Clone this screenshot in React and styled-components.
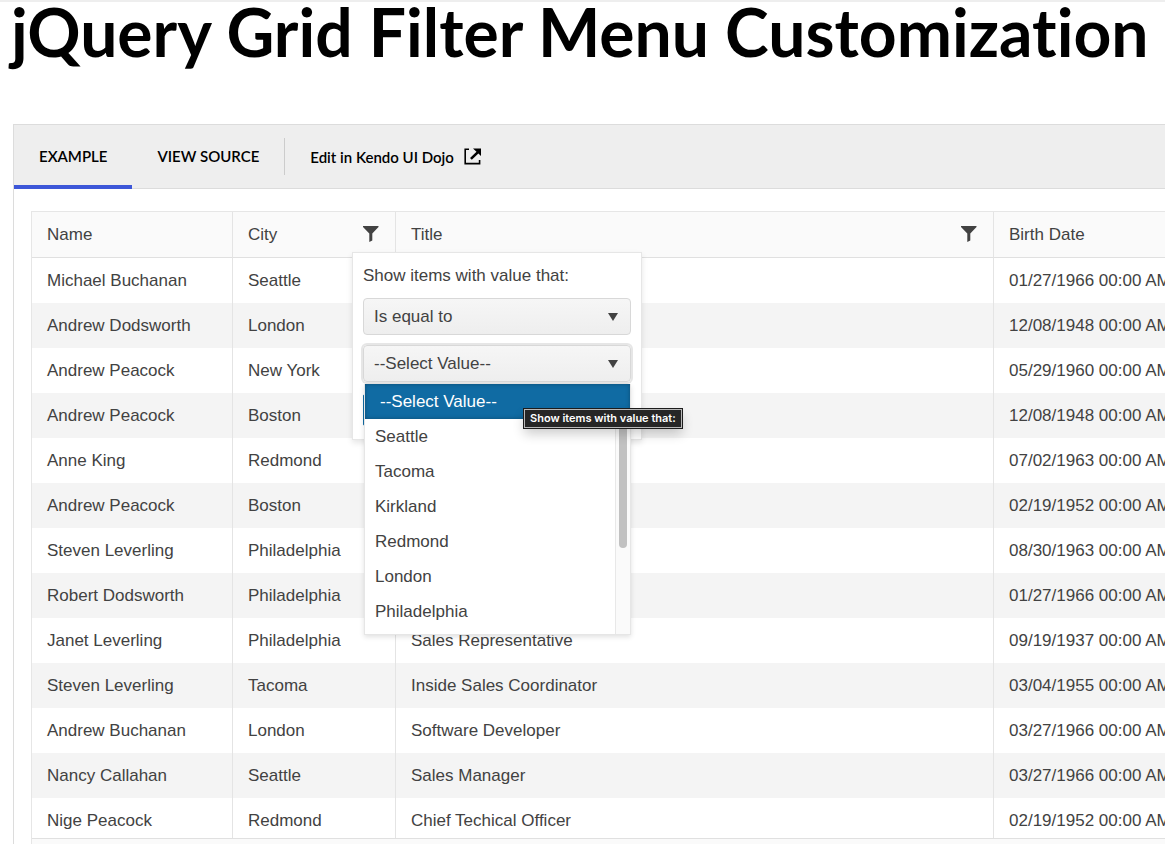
import React, { useState } from 'react'
import styled, { createGlobalStyle } from 'styled-components'

const employees = [
  ['Michael Buchanan', 'Seattle', '', '01/27/1966 00:00 AM'],
  ['Andrew Dodsworth', 'London', '', '12/08/1948 00:00 AM'],
  ['Andrew Peacock', 'New York', '', '05/29/1960 00:00 AM'],
  ['Andrew Peacock', 'Boston', '', '12/08/1948 00:00 AM'],
  ['Anne King', 'Redmond', '', '07/02/1963 00:00 AM'],
  ['Andrew Peacock', 'Boston', '', '02/19/1952 00:00 AM'],
  ['Steven Leverling', 'Philadelphia', '', '08/30/1963 00:00 AM'],
  ['Robert Dodsworth', 'Philadelphia', '', '01/27/1966 00:00 AM'],
  ['Janet Leverling', 'Philadelphia', 'Sales Representative', '09/19/1937 00:00 AM'],
  ['Steven Leverling', 'Tacoma', 'Inside Sales Coordinator', '03/04/1955 00:00 AM'],
  ['Andrew Buchanan', 'London', 'Software Developer', '03/27/1966 00:00 AM'],
  ['Nancy Callahan', 'Seattle', 'Sales Manager', '03/27/1966 00:00 AM'],
  ['Nige Peacock', 'Redmond', 'Chief Techical Officer', '02/19/1952 00:00 AM'],
]

const cities = ['Seattle', 'Tacoma', 'Kirkland', 'Redmond', 'London', 'Philadelphia']

const FilterIcon = () => (
  <svg width="16" height="16" viewBox="0 0 16 16" fill="#424242" aria-hidden="true">
    <path d="M0 0h15.500v1L9.300 7.500V14.500L6.300 16V7.500L0 1z" />
  </svg>
)

const ExternalIcon = () => (
  <svg width="17" height="17" viewBox="0 0 17 17" aria-hidden="true">
    <path d="M5 1.200H1.200V15.600H15.600V12" fill="none" stroke="#000" strokeWidth="1.600" />
    <path d="M9 .500h8v7.500l-2.600-2.500-6.600 6.300-1.800-1.800 6.500-6.300z" fill="#000" />
  </svg>
)

const Arrow = () => (
  <ArrowIcon width="10" height="8" viewBox="0 0 10 8" fill="#424242" aria-hidden="true">
    <path d="M0 0h10L5 8z" />
  </ArrowIcon>
)

const FilterMenu = () => {
  const [operator, setOperator] = useState('eq')
  const [city, setCity] = useState('')

  return (
    <Menu>
      <MenuLabel htmlFor="operator">Show items with value that:</MenuLabel>
      <SelectBox>
        <Select id="operator" value={operator} onChange={(e) => setOperator(e.target.value)}>
          <option value="eq">Is equal to</option>
          <option value="neq">Is not equal to</option>
        </Select>
        <Arrow />
      </SelectBox>
      <SelectBox>
        <Select $focused aria-label="City value" value={city} onChange={(e) => setCity(e.target.value)}>
          <option value="">--Select Value--</option>
          {cities.map((c) => <option key={c} value={c}>{c}</option>)}
        </Select>
        <Arrow />
        <List role="listbox" aria-label="Cities">
          <Current role="option" aria-selected={city === ''} onClick={() => setCity('')}>--Select Value--</Current>
          <ListBody>
            <Items role="group">
              {cities.map((c) => (
                <Item key={c} role="option" aria-selected={city === c} onClick={() => setCity(c)}>{c}</Item>
              ))}
            </Items>
            <Track><Thumb /></Track>
          </ListBody>
        </List>
        <Tooltip role="tooltip">Show items with value that:</Tooltip>
      </SelectBox>
      <FilterButton aria-label="Filter" />
    </Menu>
  )
}

const App = () => {
  return (
    <Page>
      <GlobalStyle />
      <Title>jQuery Grid Filter Menu Customization</Title>
      <Panel>
        <Toolbar>
          <Tab $active>EXAMPLE</Tab>
          <Tab>VIEW SOURCE</Tab>
          <Divider />
          <DojoLink href="#dojo">Edit in Kendo UI Dojo <ExternalIcon /></DojoLink>
        </Toolbar>
        <Grid>
          <GridBody>
            <Table>
              <colgroup>
                <Col $width="200px" />
                <Col $width="163px" />
                <Col $width="auto" />
                <Col $width="172px" />
              </colgroup>
              <thead>
                <tr>
                  <HeadCell>Name</HeadCell>
                  <HeadCell>
                    <HeadInner>
                      City
                      <IconButton aria-label="Filter city"><FilterIcon /></IconButton>
                    </HeadInner>
                    <FilterMenu />
                  </HeadCell>
                  <HeadCell>
                    <HeadInner>
                      Title
                      <IconButton aria-label="Filter title"><FilterIcon /></IconButton>
                    </HeadInner>
                  </HeadCell>
                  <HeadCell>Birth Date</HeadCell>
                </tr>
              </thead>
              <tbody>
                {employees.map((row, i) => (
                  <Row key={i}>
                    {row.map((value, j) => <Cell key={j}>{value}</Cell>)}
                  </Row>
                ))}
              </tbody>
            </Table>
          </GridBody>
          <Pager />
        </Grid>
      </Panel>
    </Page>
  )
}

export default App

const GlobalStyle = createGlobalStyle`
    *{
        box-sizing: border-box;
    }
    body{
        margin: 0;
        background: #fff;
        color: #424242;
        font-family: "Liberation Sans", Arial, sans-serif;
        font-size: 17px;
    }
    button, select{
        font: inherit;
        color: inherit;
    }
`

const Page = styled.main`
    height: 100vh;
    overflow: hidden;
    border-top: 2px solid #eeeeee;
`

const Title = styled.h1`
    margin: 0 0 62px 11px;
    color: #000;
    font-family: Lato, sans-serif;
    font-size: 66px;
    font-weight: 700;
    line-height: 60px;
    font-variant-ligatures: none;
    white-space: nowrap;
`

const Panel = styled.section`
    margin-left: 13px;
    border: 1px solid #dcdcdc;
    border-right: 0;
`

const Toolbar = styled.nav`
    display: flex;
    align-items: center;
    height: 64px;
    background: #eeeeee;
    border-bottom: 1px solid #dcdcdc;
    font-family: Lato, sans-serif;
    font-size: 15px;
    font-weight: 600;
    color: #000;
`

const Tab = styled.button`
    height: 64px;
    margin-bottom: -1px;
    padding: 2px 25px 0;
    border: 0;
    border-bottom: 4px solid ${({ $active }) => ($active ? '#3d57d8' : 'transparent')};
    background: none;
    cursor: pointer;
`

const Divider = styled.span`
    width: 1px;
    height: 37px;
    background: #cccccc;
`

const DojoLink = styled.a`
    display: flex;
    align-items: center;
    gap: 10px;
    padding-left: 25px;
    color: #000;
    text-decoration: none;
`

const Grid = styled.div`
    margin: 22px 0 0 17px;
    border: 1px solid #e6e6e6;
    border-right: 0;
`

const GridBody = styled.div`
    height: 626px;
    overflow: hidden;
`

const Pager = styled.div`
    height: 50px;
    border-top: 1px solid #e0e0e0;
    background: #fafafa;
`

const Table = styled.table`
    width: 100%;
    table-layout: fixed;
    border-collapse: separate;
    border-spacing: 0;
`

const Col = styled.col`
    width: ${({ $width }) => $width};
`

const HeadCell = styled.th`
    position: relative;
    height: 46px;
    padding: 0 0 0 15px;
    background: #fafafa;
    border-bottom: 1px solid #e0e0e0;
    font-weight: 400;
    text-align: left;
    & + &{
        border-left: 1px solid #e4e4e4;
    }
`

const HeadInner = styled.div`
    display: flex;
    align-items: center;
    justify-content: space-between;
    padding-right: 16px;
`

const IconButton = styled.button`
    display: flex;
    padding: 0 0 2px;
    border: 0;
    background: none;
    cursor: pointer;
`

const Row = styled.tr`
    &:nth-child(even){
        background: #f4f4f4;
    }
`

const Cell = styled.td`
    height: 45px;
    padding: 0 0 0 15px;
    overflow: hidden;
    white-space: nowrap;
    & + &{
        border-left: 1px solid #e4e4e4;
    }
`

const Menu = styled.form`
    position: absolute;
    top: 40px;
    left: 119px;
    z-index: 2;
    display: flex;
    flex-direction: column;
    gap: 10px;
    width: 290px;
    height: 188px;
    padding: 10px;
    background: #fff;
    border: 1px solid #e6e6e6;
    box-shadow: 0 3px 6px rgba(0, 0, 0, 0.1);
`

const MenuLabel = styled.label`
    line-height: 25px;
`

const SelectBox = styled.div`
    position: relative;
`

const Select = styled.select`
    display: block;
    appearance: none;
    width: 100%;
    height: 37px;
    padding: 0 10px;
    border: 1px solid #d8d8d8;
    border-radius: 4px;
    outline: none;
    background: linear-gradient(#f6f6f6, #eeeeee);
    box-shadow: ${({ $focused }) => ($focused ? '0 0 0 2px #e6e6e6' : 'none')};
`

const ArrowIcon = styled.svg`
    position: absolute;
    top: 15px;
    right: 13px;
    pointer-events: none;
`

const List = styled.div`
    position: absolute;
    top: 39px;
    left: 1px;
    z-index: 1;
    width: 267px;
    background: #fff;
    border: 1px solid #e6e6e6;
    border-top: 0;
    box-shadow: 0 2px 5px rgba(0, 0, 0, 0.12);
`

const Current = styled.div`
    height: 35px;
    padding-left: 15px;
    line-height: 35px;
    color: #fff;
    background: #106ba3;
    box-shadow: inset 0 0 4px rgba(0, 0, 0, 0.3);
`

const ListBody = styled.div`
    display: flex;
`

const Items = styled.div`
    flex: 1;
    height: 215px;
`

const Item = styled.div`
    height: 35px;
    padding-left: 10px;
    line-height: 35px;
`

const Track = styled.div`
    width: 15px;
    padding: 0 3px;
    background: #fafafa;
    border-left: 1px solid #e8e8e8;
`

const Thumb = styled.div`
    width: 8px;
    height: 129px;
    border-radius: 0 0 4px 4px;
    background: #c1c1c1;
`

const Tooltip = styled.div`
    position: absolute;
    top: 64px;
    left: 161px;
    z-index: 2;
    height: 19px;
    padding: 0 5px;
    border: 1px solid #b8b8b8;
    outline: 1px solid #1c1c1c;
    background: #262626;
    color: #fff;
    font-family: Inter, sans-serif;
    font-size: 11px;
    font-weight: 600;
    line-height: 17px;
    white-space: nowrap;
    box-shadow: 0 6px 12px rgba(0, 0, 0, 0.2);
`

const FilterButton = styled.button`
    width: 128px;
    height: 32px;
    margin-top: 2px;
    border: 1px solid #106ba3;
    border-radius: 2px;
    background: #106ba3;
`
